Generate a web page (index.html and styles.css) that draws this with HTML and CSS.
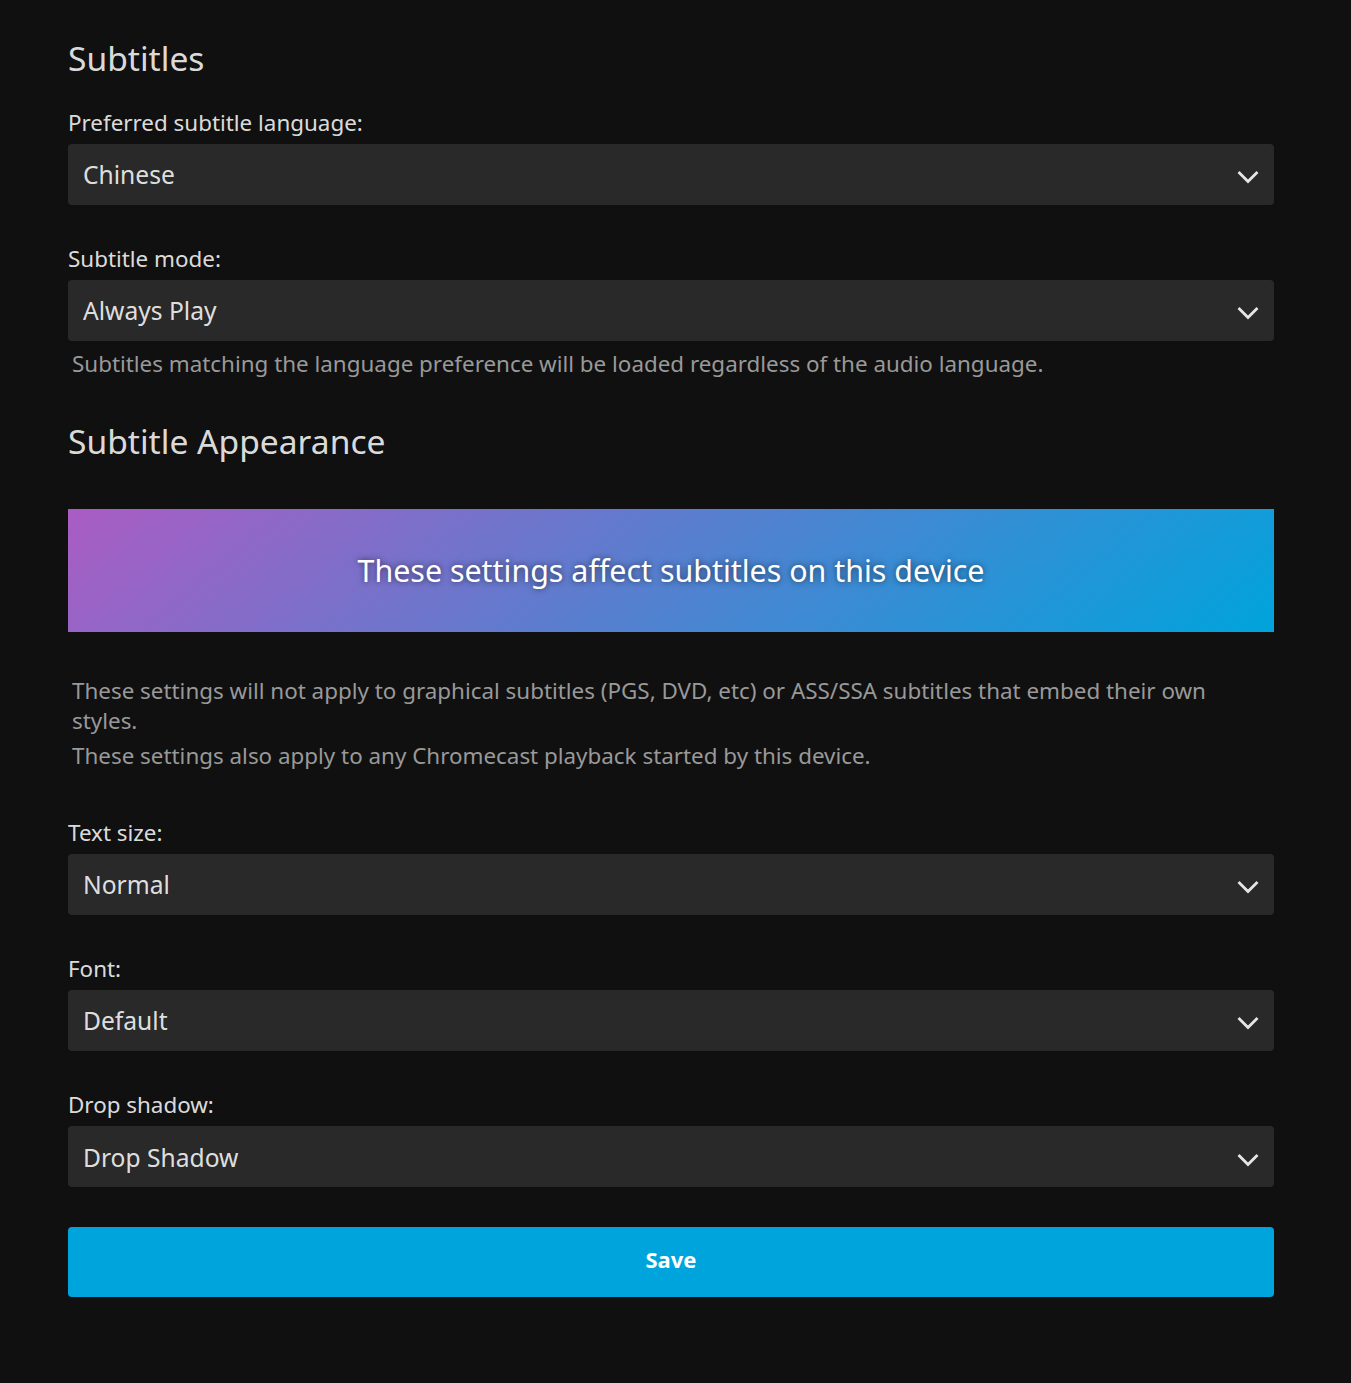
FILE: index.html
```html
<!DOCTYPE html>
<html lang="en">
<head>
<meta charset="utf-8">
<title>Subtitles</title>
<link rel="stylesheet" href="styles.css">
</head>
<body>
<div class="page">
  <h2 class="section-title first">Subtitles</h2>

  <div class="select-container">
    <label class="select-label">Preferred subtitle language:</label>
    <div class="select">
      <span class="select-value">Chinese</span>
      <svg class="chevron" viewBox="0 0 22 22" width="22" height="22"><path d="M2.5 10 L11 18.5 L19.5 10"/></svg>
    </div>
  </div>

  <div class="select-container">
    <label class="select-label">Subtitle mode:</label>
    <div class="select">
      <span class="select-value">Always Play</span>
      <svg class="chevron" viewBox="0 0 22 22" width="22" height="22"><path d="M2.5 10 L11 18.5 L19.5 10"/></svg>
    </div>
    <div class="field-description">Subtitles matching the language preference will be loaded regardless of the audio language.</div>
  </div>

  <h2 class="section-title appearance">Subtitle Appearance</h2>

  <div class="preview">
    <div class="preview-text">These settings affect subtitles on this device</div>
  </div>

  <div class="notes">
    <div class="note">These settings will not apply to graphical subtitles (PGS, DVD, etc) or ASS/SSA subtitles that embed their own styles.</div>
    <div class="note second">These settings also apply to any Chromecast playback started by this device.</div>
  </div>

  <div class="select-container">
    <label class="select-label">Text size:</label>
    <div class="select">
      <span class="select-value">Normal</span>
      <svg class="chevron" viewBox="0 0 22 22" width="22" height="22"><path d="M2.5 10 L11 18.5 L19.5 10"/></svg>
    </div>
  </div>

  <div class="select-container">
    <label class="select-label">Font:</label>
    <div class="select">
      <span class="select-value">Default</span>
      <svg class="chevron" viewBox="0 0 22 22" width="22" height="22"><path d="M2.5 10 L11 18.5 L19.5 10"/></svg>
    </div>
  </div>

  <div class="select-container">
    <label class="select-label">Drop shadow:</label>
    <div class="select">
      <span class="select-value">Drop Shadow</span>
      <svg class="chevron" viewBox="0 0 22 22" width="22" height="22"><path d="M2.5 10 L11 18.5 L19.5 10"/></svg>
    </div>
  </div>

  <button class="save-button" type="button">Save</button>
</div>
</body>
</html>
```

FILE: styles.css
```css
html, body {
  margin: 0;
  padding: 0;
  background: #101010;
}

body {
  font-family: "Noto Sans", "Open Sans", sans-serif;
  color: rgba(255, 255, 255, 0.87);
  font-size: 22.4px;
  min-height: 1383px;
}

.page {
  width: 1206px;
  margin-left: 68px;
  padding-top: 37px;
  padding-bottom: 40px;
}

.section-title {
  font-size: 33.6px;
  font-weight: 400;
  line-height: 42px;
  margin: 0 0 29px 0;
}

.section-title.appearance {
  padding-top: 1.5px;
  margin-bottom: 46.5px;
}

.select-container {
  margin-bottom: 39.5px;
}

.select-label {
  display: block;
  font-size: 22.4px;
  line-height: 30.24px;
  margin-bottom: 5.5px;
}

.select {
  display: flex;
  align-items: center;
  justify-content: space-between;
  height: 61px;
  box-sizing: border-box;
  background: #292929;
  border-radius: 4px;
  padding: 0 15px 0 15px;
}

.select-value {
  font-size: 24.6px;
  line-height: 33px;
  color: rgba(255, 255, 255, 0.87);
  padding-top: 1px;
}

.chevron {
  flex: none;
  fill: none;
  stroke: #e6e6e6;
  stroke-width: 2.8;
  stroke-linecap: square;
}

.field-description {
  font-size: 22.4px;
  line-height: 30.24px;
  color: #999999;
  padding-left: 4px;
  margin-top: 8px;
}

.preview {
  height: 123px;
  display: flex;
  align-items: center;
  justify-content: center;
  background: linear-gradient(140deg, #aa5cc3, #00a4dc);
}

.preview-text {
  font-size: 30.4px;
  color: #ffffff;
  text-shadow: 0 0 6px rgba(0, 0, 0, 0.6);
}

.notes {
  margin-top: 44px;
  margin-bottom: 46.5px;
  padding-left: 4px;
}

.note {
  font-size: 22.4px;
  line-height: 30.24px;
  color: #999999;
}

.note.second {
  margin-top: 5px;
}

.save-button {
  display: block;
  width: 100%;
  height: 70px;
  border: 0;
  border-radius: 4px;
  background: #00a4dc;
  color: #ffffff;
  font-family: "Noto Sans", "Open Sans", sans-serif;
  font-size: 22px;
  font-weight: 700;
  padding: 0 0 6px 0;
  cursor: pointer;
}
```
